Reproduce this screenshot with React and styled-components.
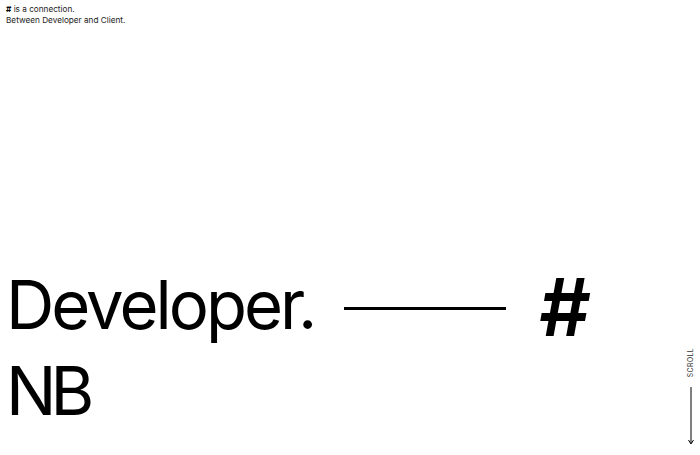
import styled, { createGlobalStyle } from "styled-components";

const GlobalStyle = createGlobalStyle`
  html, body {
    margin: 0;
    padding: 0;
    background: #ffffff;
  }
  body {
    font-family: "Inter", "Liberation Sans", sans-serif;
    color: #000000;
  }
`;

const Page = styled.div`
  position: relative;
  height: 455px;
  width: 700px;
  overflow: hidden;
  display: flex;
  flex-direction: column;
  justify-content: space-between;
`;

const Intro = styled.div`
  padding: 4px 0 0 6px;
  font-size: 8.2px;
  line-height: 11px;
  color: #222;

  b {
    font-weight: 700;
    color: #000;
  }
`;

const Hero = styled.div`
  padding: 0 0 22px 6px;
  display: flex;
  flex-direction: column;
`;

const Row = styled.div`
  display: flex;
  align-items: center;
  height: 86px;
`;

const Big = styled.h1`
  margin: 0;
  font-size: 67px;
  font-weight: 400;
  letter-spacing: ${({ $tight }) => ($tight ? "-6px" : "-3px")};
  line-height: 1;
`;

const Rule = styled.span`
  display: block;
  width: 162px;
  height: 3px;
  background: #000;
  margin: 8px 0 0 30px;
`;

const Hash = styled.span`
  font-size: 80px;
  font-weight: 600;
  font-style: italic;
  margin: 6px 0 0 32px;
  line-height: 1;
`;

const ScrollCue = styled.div`
  position: absolute;
  right: 5px;
  bottom: 10px;
  display: flex;
  flex-direction: column;
  align-items: center;
  gap: 10px;
`;

const ScrollLabel = styled.span`
  writing-mode: vertical-rl;
  transform: rotate(180deg);
  font-size: 7px;
  letter-spacing: 0.3px;
  color: #333;
`;

const Arrow = () => (
  <svg width="8" height="58" viewBox="0 0 8 58">
    <line x1="4" y1="0" x2="4" y2="56" stroke="#000" strokeWidth="1" />
    <polyline points="1.5,53 4,57 6.5,53" fill="none" stroke="#000" strokeWidth="1" />
  </svg>
);

export default function App() {
  return (
    <>
      <GlobalStyle />
      <Page>
        <Intro>
          <b>#</b> is a connection.
          <br />
          Between Developer and Client.
        </Intro>
        <Hero>
          <Row>
            <Big>Developer.</Big>
            <Rule />
            <Hash>#</Hash>
          </Row>
          <Row>
            <Big $tight>NB</Big>
          </Row>
        </Hero>
        <ScrollCue>
          <ScrollLabel>SCROLL</ScrollLabel>
          <Arrow />
        </ScrollCue>
      </Page>
    </>
  );
}
